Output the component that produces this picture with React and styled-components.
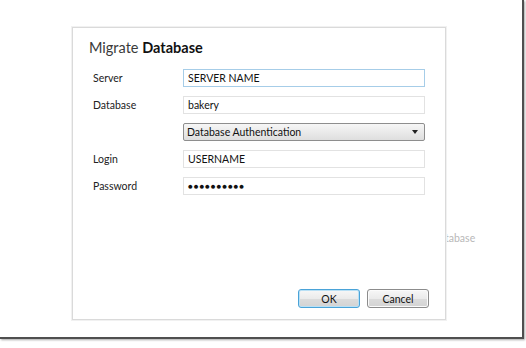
import React from "react";
import styled, { createGlobalStyle } from "styled-components";

const GlobalStyle = createGlobalStyle`
  html, body {
    margin: 0;
    padding: 0;
    background: #ffffff;
  }
  body {
    font-family: Lato, "Open Sans", "Liberation Sans", sans-serif;
    font-size: 10.5px;
    color: #1e1e1e;
  }
`;

const Page = styled.div`
  width: 526px;
  height: 348px;
  overflow: hidden;
`;

// the captured window, with its dark right and bottom edge
const Screen = styled.div`
  position: relative;
  width: 524px;
  height: 339px;
  border-right: 2px solid #4f4f4f;
  border-bottom: 2px solid #4f4f4f;
  box-shadow: 1px 1px 2px rgba(0, 0, 0, 0.35);
  padding: 27px 0 0 72px;
  box-sizing: border-box;
`;

const Behind = styled.span`
  position: absolute;
  left: 432px;
  top: 232px;
  color: #b8b8b8;
  font-size: 10.5px;
`;

const Dialog = styled.div`
  position: relative;
  z-index: 1;
  width: 374px;
  height: 293px;
  box-sizing: border-box;
  background: #ffffff;
  border: 1px solid #dadada;
  box-shadow: 0 0 0 1px #f1f1f1;
  display: flex;
  flex-direction: column;
  padding: 10px 16px 11px 16px;
`;

const Title = styled.h1`
  margin: 0 0 11px 0;
  font-size: 14.5px;
  font-weight: 400;
  line-height: 20px;
  color: #3a3a3a;

  b {
    font-weight: 700;
    color: #111111;
  }
`;

const Form = styled.div`
  display: grid;
  grid-template-columns: 90px 242px;
  grid-auto-rows: 18px;
  row-gap: 9px;
  padding-left: 4px;
  align-items: center;
`;

const Label = styled.div`
  font-size: 10.5px;
  color: #222222;
`;

const Field = styled.div`
  grid-column: 2;
  height: 18px;
  box-sizing: border-box;
  border: 1px solid ${(p) => (p.$focus ? "#a6cde8" : "#e2e2e2")};
  background: #ffffff;
  padding: 0 4px;
  display: flex;
  align-items: center;
  font-size: 10.5px;
  color: #111111;
`;

const Select = styled.div`
  grid-column: 2;
  height: 18px;
  box-sizing: border-box;
  border: 1px solid #8e8e8e;
  border-radius: 2px;
  background: linear-gradient(#f6f6f6, #dedede);
  padding: 0 6px 0 3px;
  display: flex;
  align-items: center;
  justify-content: space-between;
  font-size: 10.5px;
  color: #111111;
`;

const Arrow = styled.span`
  width: 0;
  height: 0;
  border-left: 3px solid transparent;
  border-right: 3px solid transparent;
  border-top: 4px solid #222222;
`;

const Dots = styled.span`
  font-size: 8px;
  letter-spacing: 0.9px;
  color: #111111;
`;

const Buttons = styled.div`
  margin-top: auto;
  display: flex;
  justify-content: flex-end;
  gap: 7px;
`;

const Button = styled.button`
  width: 62px;
  height: 19px;
  box-sizing: border-box;
  border: 1px solid ${(p) => (p.$primary ? "#4aa3d8" : "#8c8c8c")};
  border-radius: 3px;
  background: linear-gradient(#f7f7f7 0%, #ebebeb 50%, #dcdcdc 51%, #d3d3d3 100%);
  box-shadow: inset 0 0 0 1px ${(p) => (p.$primary ? "#b9e0f5" : "#fbfbfb")};
  font-family: inherit;
  font-size: 10.5px;
  color: #111111;
  padding: 0;
`;

export default function App() {
  return (
    <Page>
      <GlobalStyle />
      <Screen>
        <Behind>Database</Behind>
        <Dialog>
          <Title>
            Migrate <b>Database</b>
          </Title>
          <Form>
            <Label>Server</Label>
            <Field $focus>SERVER NAME</Field>
            <Label>Database</Label>
            <Field>bakery</Field>
            <Select>
              <span>Database Authentication</span>
              <Arrow />
            </Select>
            <Label>Login</Label>
            <Field>USERNAME</Field>
            <Label>Password</Label>
            <Field>
              <Dots>●●●●●●●●●●</Dots>
            </Field>
          </Form>
          <Buttons>
            <Button $primary>OK</Button>
            <Button>Cancel</Button>
          </Buttons>
        </Dialog>
      </Screen>
    </Page>
  );
}
